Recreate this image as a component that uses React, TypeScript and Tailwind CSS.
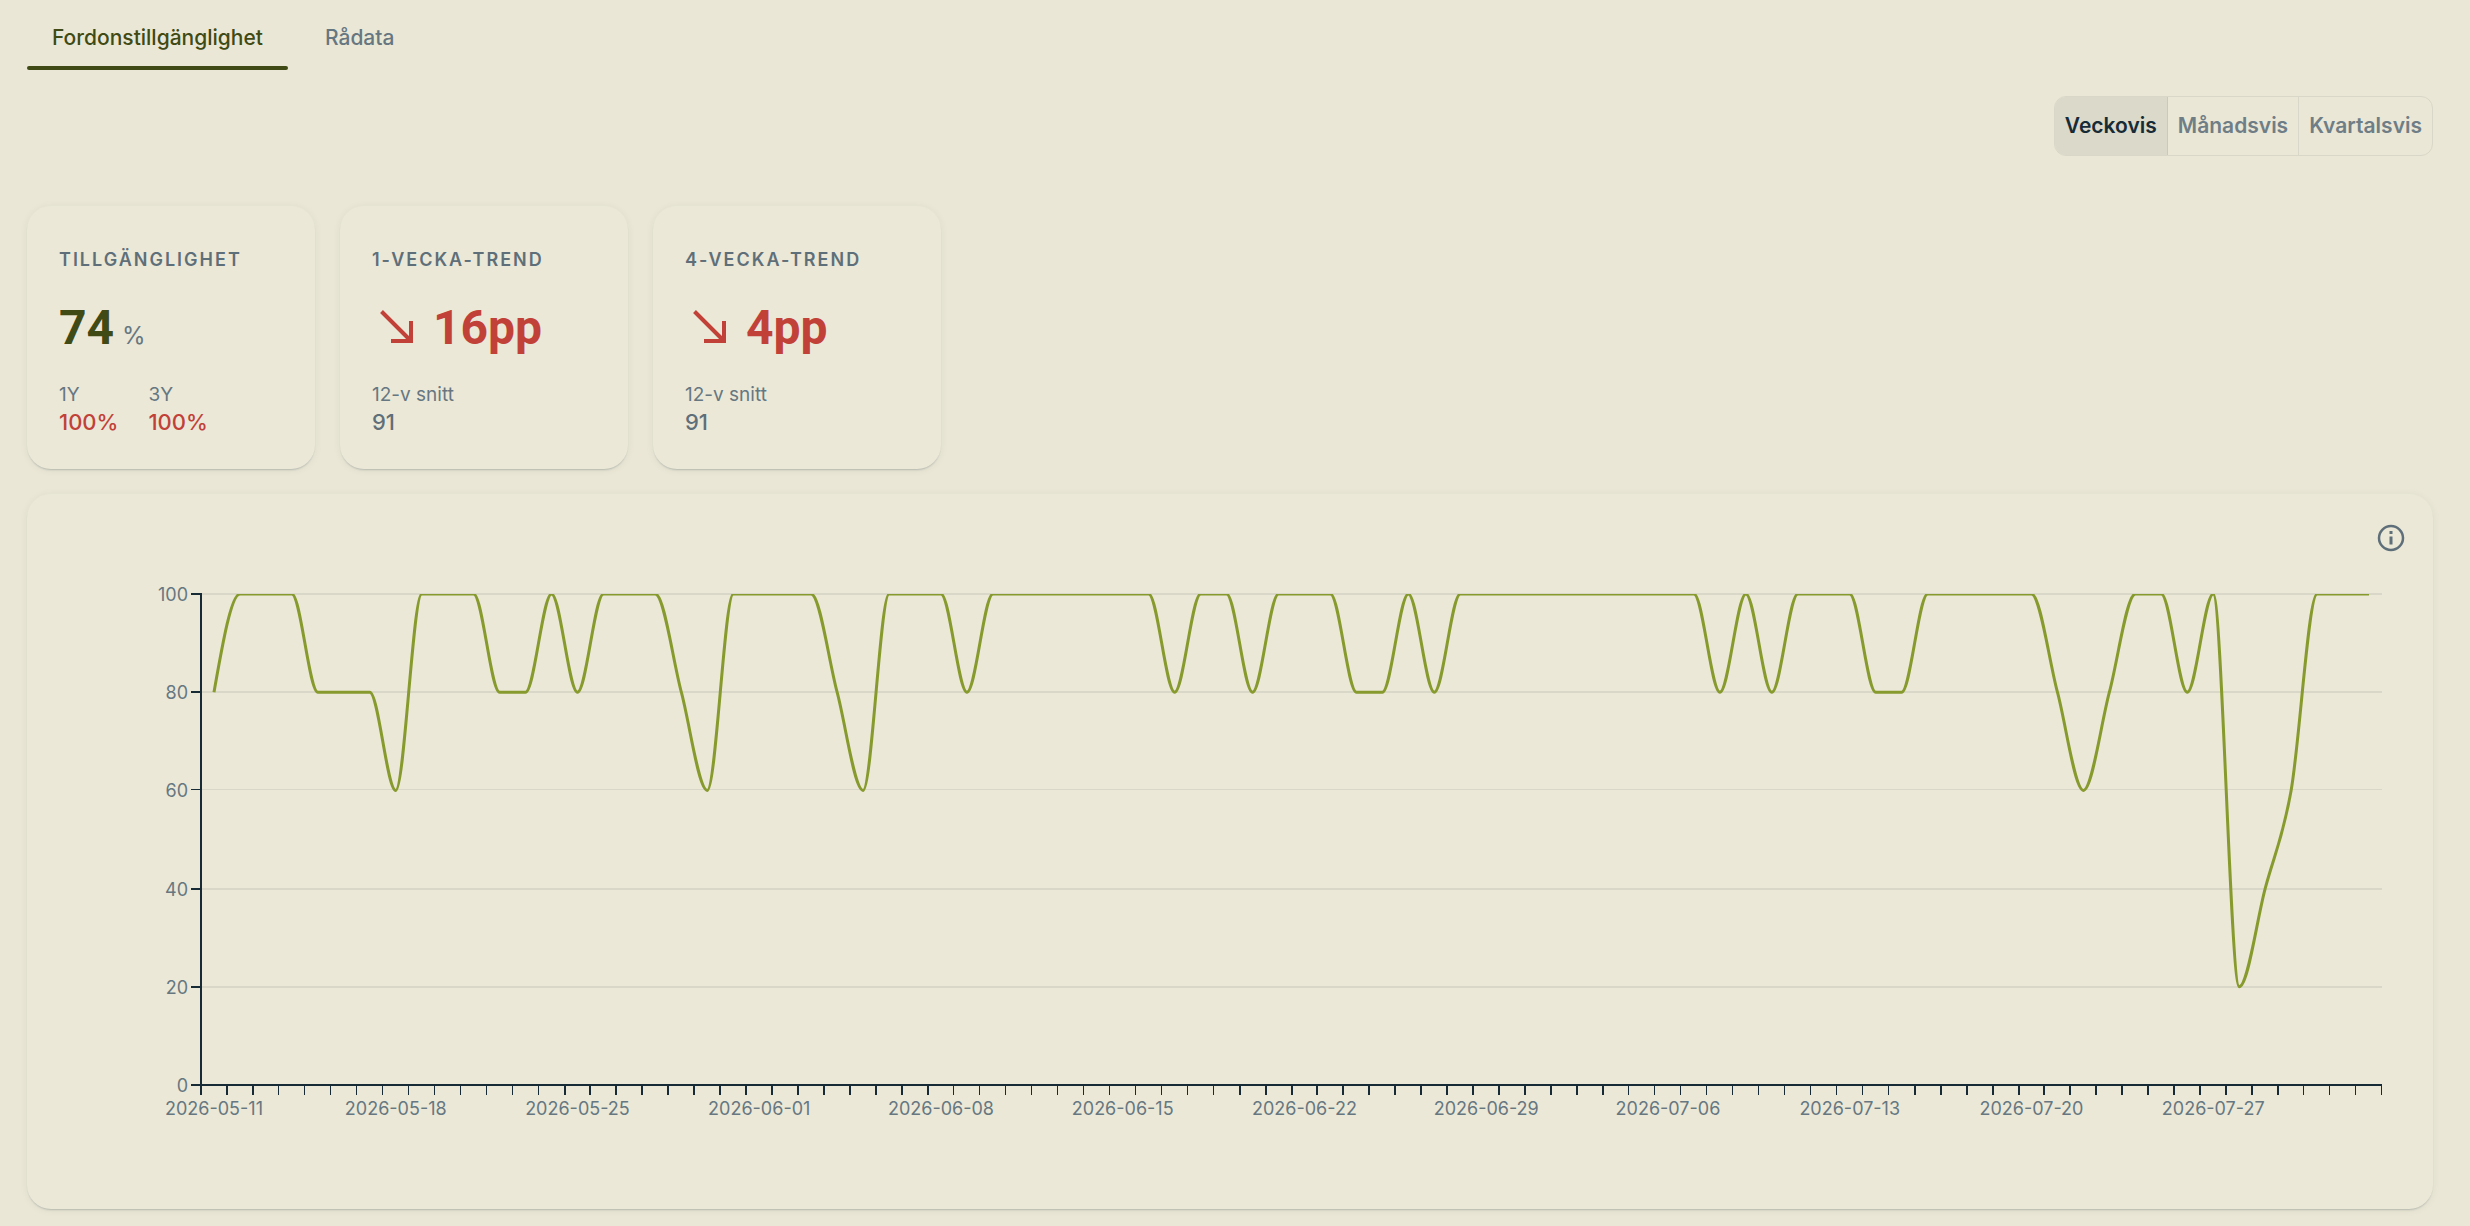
import { useLayoutEffect, useRef, useState } from "react";

const VALUES = [
  80, 100, 100, 100, 80, 80, 80, 60, 100, 100, 100, 80, 80, 100, 80, 100, 100, 100, 80, 60, 100, 100, 100, 100, 80, 60,
  100, 100, 100, 80, 100, 100, 100, 100, 100, 100, 100, 80, 100, 100, 80, 100, 100, 100, 80, 80, 100, 80, 100, 100, 100,
  100, 100, 100, 100, 100, 100, 100, 80, 100, 80, 100, 100, 100, 80, 80, 100, 100, 100, 100, 100, 80, 60, 80, 100, 100,
  80, 100, 20, 40, 60, 100, 100, 100,
];

const WEEKS = [
  "2026-05-11", "2026-05-18", "2026-05-25", "2026-06-01", "2026-06-08", "2026-06-15",
  "2026-06-22", "2026-06-29", "2026-07-06", "2026-07-13", "2026-07-20", "2026-07-27",
];

const PLOT = { left: 174, right: 51, top: 28, height: 491 };
const CHART_HEIGHT = 600;

/** Monotone cubic path through evenly spaced points. */
function monotonePath(points: number[][]): string {
  const last = points.length - 1;
  const dx = points[1][0] - points[0][0];
  const secant = points.slice(1).map(([, y], i) => (y - points[i][1]) / dx);
  const tangent = points.map((_, i) => {
    if (i === 0 || i === last) return 0;
    const a = secant[i - 1];
    const b = secant[i];
    return (Math.sign(a) + Math.sign(b)) * Math.min(Math.abs(a), Math.abs(b), Math.abs(a + b) / 4);
  });
  tangent[0] = (3 * secant[0] - tangent[1]) / 2;
  tangent[last] = (3 * secant[last - 1] - tangent[last - 1]) / 2;
  const h = dx / 3;
  return points.reduce((d, [x, y], i) => {
    if (i === 0) return `M${x},${y}`;
    const [px, py] = points[i - 1];
    return `${d}C${px + h},${py + h * tangent[i - 1]} ${x - h},${y - h * tangent[i]} ${x},${y}`;
  }, "");
}

function AvailabilityChart() {
  const ref = useRef<HTMLDivElement>(null);
  const [width, setWidth] = useState(2406);
  useLayoutEffect(() => {
    const el = ref.current;
    if (!el) return;
    const update = () => setWidth(el.clientWidth);
    update();
    const observer = new ResizeObserver(update);
    observer.observe(el);
    return () => observer.disconnect();
  }, []);

  const plotWidth = width - PLOT.left - PLOT.right;
  const step = plotWidth / VALUES.length;
  const bottom = PLOT.top + PLOT.height;
  const yOf = (v: number) => bottom - (v / 100) * PLOT.height;
  const points = VALUES.map((v, i) => [PLOT.left + step * (i + 0.5), yOf(v)]);

  return (
    <div ref={ref} className="w-full min-w-0">
      <svg width={width} height={CHART_HEIGHT} className="block" role="img" aria-label="Fordonstillgänglighet per dag">
        <clipPath id="plot-area">
          <rect x={PLOT.left} y={PLOT.top} width={plotWidth} height={PLOT.height} />
        </clipPath>
        {[0, 20, 40, 60, 80, 100].map((v) => {
          const y = Math.round(yOf(v));
          const thin = v === 60;
          return (
            <g key={v}>
              {v > 0 && (
                <rect x={PLOT.left} y={y - 1} width={plotWidth} height={thin ? 1 : 2} className="fill-[#d9d7c8]" />
              )}
              <rect x={PLOT.left - 10} y={y - 1} width={10} height={thin ? 1 : 2} className="fill-[#172b36]" />
              <text x={PLOT.left - 13} y={y + 7} textAnchor="end" className="fill-[#667781] text-[18px]">
                {v}
              </text>
            </g>
          );
        })}
        <rect x={PLOT.left - 1} y={PLOT.top - 1} width={2} height={PLOT.height + 2} className="fill-[#172b36]" />
        <rect x={PLOT.left - 1} y={bottom - 1} width={plotWidth + 1} height={2} className="fill-[#172b36]" />
        {Array.from({ length: VALUES.length + 1 }, (_, i) => (
          <rect
            key={i}
            x={Math.round(PLOT.left + step * i) - 1}
            y={bottom}
            width={(i + 23) % 26 <= 10 ? 1 : 2}
            height={10}
            className="fill-[#172b36]"
          />
        ))}
        {WEEKS.map((week, i) => (
          <text
            key={week}
            x={PLOT.left + step * (i * 7 + 0.5)}
            y={bottom + 30}
            textAnchor="middle"
            className="fill-[#667781] text-[18px]"
          >
            {week}
          </text>
        ))}
        <path d={monotonePath(points)} clipPath="url(#plot-area)" fill="none" className="stroke-[#879a2d] stroke-3" strokeLinejoin="bevel" />
      </svg>
    </div>
  );
}

const CARD = "rounded-3xl bg-[#ebe8d7] shadow-[0_2px_2px_-1px_rgba(23,43,54,0.22),0_1px_8px_rgba(23,43,54,0.06)]";

function KpiCard({ title, children }: { title: string; children: React.ReactNode }) {
  return (
    <section className={`${CARD} flex h-[263px] w-[288px] flex-col px-8 pt-[42px]`}>
      <h2 className="text-[18px] leading-6 font-semibold tracking-[2px] text-[#5f6f79] uppercase">{title}</h2>
      {children}
    </section>
  );
}

function Stat({ label, value, bad }: { label: string; value: string; bad?: boolean }) {
  return (
    <div>
      <dt className="text-[19px] leading-7 text-[#667781]">{label}</dt>
      <dd className={bad ? "text-[22px] leading-[26px] font-medium text-[#c14138]" : "text-[22px] leading-[26px] font-medium text-[#5f6f79]"}>
        {value}
      </dd>
    </div>
  );
}

function TrendCard({ title, value }: { title: string; value: string }) {
  return (
    <KpiCard title={title}>
      <div className="mt-5 flex h-[72px] items-center gap-5 pl-2 text-[#c14138]">
        <svg viewBox="0 0 33 33" className="mb-1 size-[33px]" fill="none" stroke="currentColor" strokeWidth="4" aria-hidden="true">
          <path d="M1.5 1.5 30 30M31 11v20H11" />
        </svg>
        <span className="font-['Roboto'] text-[48px] leading-[72px] font-bold">{value}</span>
      </div>
      <dl className="mt-[17px]">
        <Stat label="12-v snitt" value="91" />
      </dl>
    </KpiCard>
  );
}

export default function App() {
  const [period, setPeriod] = useState("Veckovis");
  return (
    <main className="min-h-screen bg-[#eae7d6] pr-[37px] pb-[17px] pl-[27px] font-['Inter',sans-serif] text-[#172b36]">
      <nav role="tablist" className="flex h-[70px] gap-3">
        <button role="tab" aria-selected="true" className="relative px-[25px] pt-1.5 text-[21px] font-medium text-[#3f4a14]">
          Fordonstillgänglighet
          <span className="absolute inset-x-0 bottom-0 h-1 rounded-full bg-[#3f4a14]" />
        </button>
        <button role="tab" aria-selected="false" className="px-[25px] pt-1.5 text-[21px] font-medium text-[#667781]">
          Rådata
        </button>
      </nav>

      <div className="mt-[26px] flex justify-end">
        <div role="group" className="flex h-[60px] overflow-hidden rounded-xl border border-[#d9d7c8]">
          {["Veckovis", "Månadsvis", "Kvartalsvis"].map((p) => (
            <button
              key={p}
              aria-pressed={p === period}
              onClick={() => setPeriod(p)}
              className={
                p === period
                  ? "border-r border-[#c9c9bd] bg-[#dbd9ca] px-[10px] text-[21px] font-semibold text-[#172b36] last:border-r-0"
                  : "border-r border-[#d9d7c8] px-[10px] text-[21px] font-semibold text-[#6f7e86] last:border-r-0"
              }
            >
              {p}
            </button>
          ))}
        </div>
      </div>

      <div className="mt-[50px] flex flex-wrap gap-[25px]">
        <KpiCard title="Tillgänglighet">
          <div className="mt-5 flex h-[72px] items-baseline gap-2">
            <span className="font-['Roboto'] text-[48px] leading-[72px] font-bold text-[#3f4a14]">74</span>
            <span className="text-[24px] text-[#667781]">%</span>
          </div>
          <dl className="mt-[17px] flex gap-[30px]">
            <Stat label="1Y" value="100%" bad />
            <Stat label="3Y" value="100%" bad />
          </dl>
        </KpiCard>
        <TrendCard title="1-vecka-trend" value="16pp" />
        <TrendCard title="4-vecka-trend" value="4pp" />
      </div>

      <section className={`${CARD} mt-[25px] pb-[43px]`}>
        <div className="flex h-[72px] items-end justify-end pr-7">
          <button aria-label="Information" className="mb-3.5 text-[#5f6f79]">
            <svg viewBox="0 0 28 28" className="size-7" fill="none" stroke="currentColor" aria-hidden="true">
              <circle cx="14" cy="14" r="12" strokeWidth="2.5" />
              <path d="M14 12.5v8M14 7v3" strokeWidth="3" />
            </svg>
          </button>
        </div>
        <AvailabilityChart />
      </section>
    </main>
  );
}
